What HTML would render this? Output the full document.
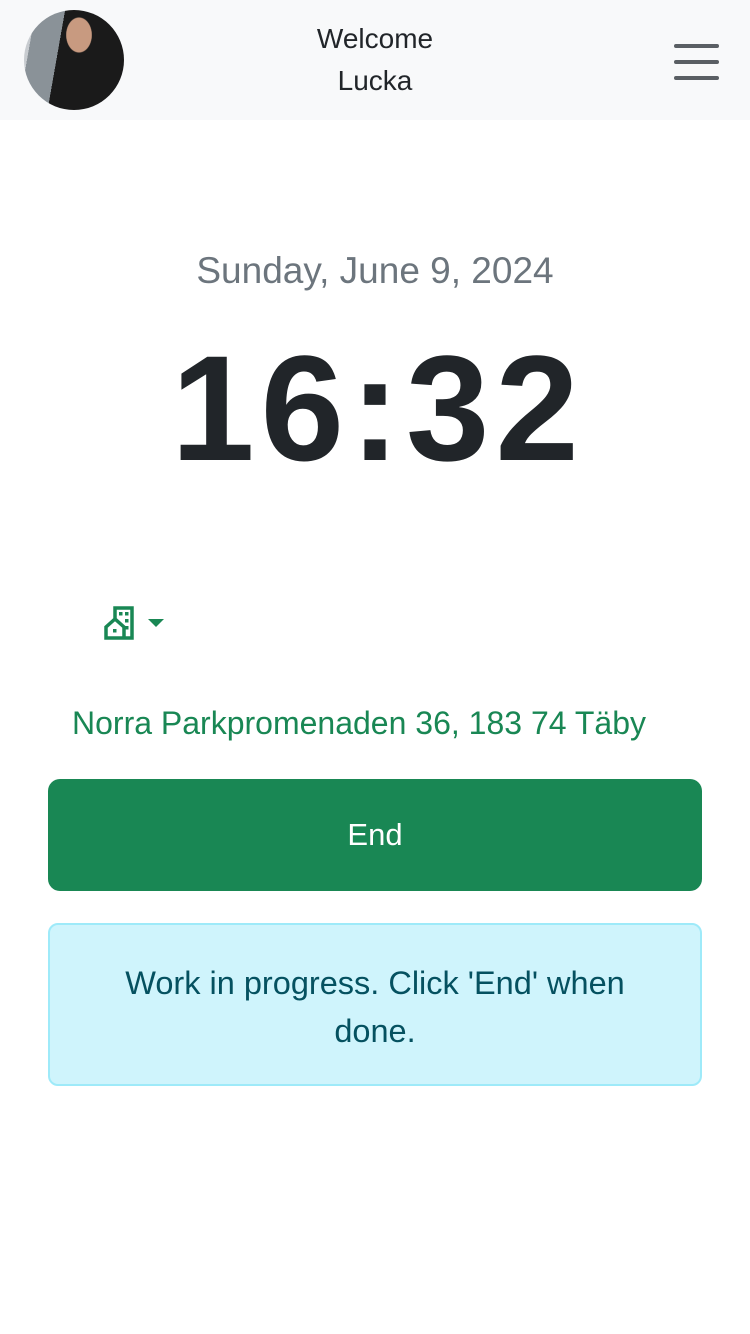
<!DOCTYPE html>
<html><head><meta charset="utf-8"><style>
*{margin:0;padding:0;box-sizing:border-box}
body{width:750px;height:1334px;background:#fff;font-family:"Liberation Sans",sans-serif;position:relative;overflow:hidden}
.hdr{position:absolute;top:0;left:0;width:750px;height:120px;background:#f8f9fa}
.av{position:absolute;left:24px;top:10px;width:100px;height:100px;border-radius:50%;background:radial-gradient(ellipse at 55% 25%,#c89a80 0 16%,transparent 17%),linear-gradient(100deg,#c8ccd0 0 10%,#8a9298 10% 35%,#1a1a1a 35%);}
.w{position:absolute;left:0;width:750px;text-align:center;font-size:28px;color:#212529}
.bar{position:absolute;left:674px;width:45px;height:4px;border-radius:2px;background:#5a5f64}
</style></head><body>
<div class="hdr"></div>
<div class="av"></div>
<div class="w" style="top:23px">Welcome</div>
<div class="w" style="top:65px">Lucka</div>
<div class="bar" style="top:44px"></div><div class="bar" style="top:60px"></div><div class="bar" style="top:76px"></div>
<div class="w" style="top:250px;font-size:37px;color:#6c757d">Sunday, June 9, 2024</div>
<div class="w" style="top:318px;font-size:150px;font-weight:bold;letter-spacing:6px;text-indent:6px;line-height:180px">16:32</div>
<svg style="position:absolute;left:103px;top:605px" width="32" height="35" viewBox="0 0 32 35" fill="none" stroke="#198754" stroke-width="3.5">
<path d="M12 14V3h17v30H3V22l9-8 9 8v11"/><rect x="16" y="7" width="3.5" height="3.5" fill="#198754" stroke="none"/><rect x="22" y="7" width="3.5" height="3.5" fill="#198754" stroke="none"/><rect x="22" y="14" width="3.5" height="3.5" fill="#198754" stroke="none"/><rect x="22" y="21" width="3.5" height="3.5" fill="#198754" stroke="none"/><rect x="10" y="24" width="3.5" height="3.5" fill="#198754" stroke="none"/></svg>
<div style="position:absolute;left:148px;top:619px;border-left:8px solid transparent;border-right:8px solid transparent;border-top:8px solid #198754"></div>
<div style="position:absolute;left:72px;top:705px;font-size:32px;color:#198754">Norra Parkpromenaden 36, 183 74 Täby</div>
<div style="position:absolute;left:48px;top:779px;width:654px;height:112px;background:#198754;border-radius:12px;color:#fff;font-size:31px;text-align:center;line-height:112px">End</div>
<div style="position:absolute;left:48px;top:923px;width:654px;height:163px;background:#cff4fc;border:2px solid #9eeaf9;border-radius:10px;color:#055160;font-size:32.5px;text-align:center;padding:34px 50px 0;line-height:48px">Work in progress. Click 'End' when done.</div>
</body></html>
